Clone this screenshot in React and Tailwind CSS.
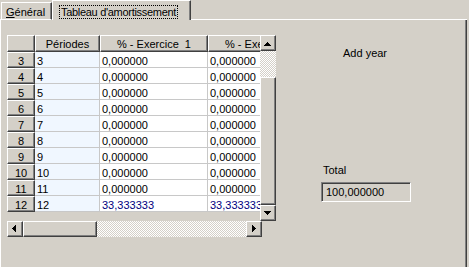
import React from "react";

const raised =
  "border border-t-white border-l-white border-r-[#404040] border-b-[#404040] shadow-[inset_-1px_-1px_#808080] bg-[#d4d0c8]";
const hatch =
  "bg-[image:repeating-conic-gradient(#ffffff_0_25%,#d4d0c8_0_50%)] bg-[length:2px_2px] bg-size-[2px_2px]";

const ARROWS = {
  up: [[3, 3, 1, 1], [2, 4, 3, 1], [1, 5, 5, 1], [0, 6, 7, 1]],
  down: [[0, 2, 7, 1], [1, 3, 5, 1], [2, 4, 3, 1], [3, 5, 1, 1]],
  left: [[1, 3, 1, 1], [2, 2, 1, 3], [3, 1, 1, 5], [4, 0, 1, 7]],
  right: [[2, 0, 1, 7], [3, 1, 1, 5], [4, 2, 1, 3], [5, 3, 1, 1]],
};

function ScrollButton({ dir }) {
  return (
    <div className={`${raised} w-[16px] h-[16px] shrink-0 flex items-center justify-center`}>
      <svg width="8" height="8" viewBox="0 0 8 8" shapeRendering="crispEdges">
        {ARROWS[dir].map(([x, y, w, h], i) => (
          <rect key={i} x={x} y={y} width={w} height={h} fill="#000" />
        ))}
      </svg>
    </div>
  );
}

const ROWS = [3, 4, 5, 6, 7, 8, 9, 10, 11, 12];

function HeaderCell({ w, children }) {
  return (
    <div
      className={`${raised} ${w} h-[17px] shrink-0 text-center leading-[16px] whitespace-pre overflow-hidden`}
    >
      {children}
    </div>
  );
}

export default function App() {
  return (
    <div className="w-[469px] h-[267px] overflow-hidden bg-[#d4d0c8] font-['Liberation_Sans',Arial,sans-serif] text-[11px] leading-[12px] text-black">
      {/* tab strip */}
      <div className="flex items-end h-[20px] w-[467px]">
        <div className="w-[1px] h-px bg-white shrink-0" />
        <div className="w-[51px] h-[18px] shrink-0 flex border border-t-white border-l-white border-b-white border-r-[#404040] shadow-[inset_-1px_0_#808080] pl-[4px] pt-[3px]">
          <span>
            <span className="underline">G</span>énéral
          </span>
        </div>
        <div className="w-[139px] h-[20px] shrink-0 flex items-start border-t border-l border-r border-t-white border-l-white border-r-[#404040] shadow-[inset_-1px_0_#808080] pl-[6px] pt-[4px]">
          <span className="border border-dotted border-black px-px leading-[12px] whitespace-nowrap tracking-[-0.3px]">
            Tableau d'amortissement
          </span>
        </div>
        <div className="flex-1 h-px bg-white" />
      </div>

      {/* panel */}
      <div className="w-[467px] h-[247px] flex border-l border-r border-l-white border-r-[#404040] shadow-[inset_-1px_0_#808080] pt-[15px] pl-[6px]">
        {/* grid */}
        <div className="flex flex-col w-[269px] shrink-0">
          <div className="flex h-[186px]">
            <div className="w-[253px] h-[186px] overflow-hidden shrink-0">
              <div className="flex h-[17px] w-[320px]">
                <HeaderCell w="w-[28px]" />
                <HeaderCell w="w-[65px]">Périodes</HeaderCell>
                <HeaderCell w="w-[108px]">{"% - Exercice  1"}</HeaderCell>
                <HeaderCell w="w-[108px]">{"% - Exercice  2"}</HeaderCell>
              </div>
              {ROWS.map((n) => {
                const last = n === 12;
                const val = last ? "33,333333" : "0,000000";
                const valColor = last ? "text-[#000080]" : "text-black";
                return (
                  <div key={n} className="flex h-[16px] w-[320px]">
                    <div className={`${raised} w-[28px] h-[16px] shrink-0 text-center leading-[16px]`}>
                      {n}
                    </div>
                    <div className="w-[65px] h-[16px] shrink-0 border-r border-b border-[#c8c8c8] bg-[#f0f7ff] pl-[2px] pt-px leading-[16px] whitespace-nowrap overflow-hidden">
                      {n}
                    </div>
                    <div className={`w-[108px] h-[16px] shrink-0 border-r border-b border-[#c8c8c8] bg-white pl-[2px] pt-px leading-[16px] whitespace-nowrap overflow-hidden ${valColor}`}>
                      {val}
                    </div>
                    <div className={`w-[108px] h-[16px] shrink-0 border-r border-b border-[#c8c8c8] bg-white pl-[2px] pt-px leading-[16px] whitespace-nowrap overflow-hidden ${valColor}`}>
                      {val}
                    </div>
                  </div>
                );
              })}
            </div>
            {/* vertical scrollbar */}
            <div className="flex flex-col w-[16px] h-[186px] shrink-0">
              <ScrollButton dir="up" />
              <div className={`h-[26px] shrink-0 ${hatch}`} />
              <div className={`${raised} h-[128px] shrink-0`} />
              <ScrollButton dir="down" />
            </div>
          </div>
          {/* horizontal scrollbar */}
          <div className="flex w-[255px] h-[16px]">
            <ScrollButton dir="left" />
            <div className={`${raised} w-[74px] h-[16px] shrink-0`} />
            <div className={`flex-1 h-[16px] ${hatch}`} />
            <ScrollButton dir="right" />
          </div>
        </div>

        {/* right side */}
        <div className="flex flex-col ml-[45px]">
          <div className="mt-[12px] ml-[22px] whitespace-nowrap">Add year</div>
          <div className="mt-[105px] ml-[2px]">Total</div>
          <div className="mt-[6px] w-[90px] h-[20px] border border-t-[#808080] border-l-[#808080] border-r-white border-b-white shadow-[inset_1px_1px_#404040] bg-[#d4d0c8] pl-[4px] pt-[3px] leading-[12px]">
            100,000000
          </div>
        </div>
      </div>
    </div>
  );
}
